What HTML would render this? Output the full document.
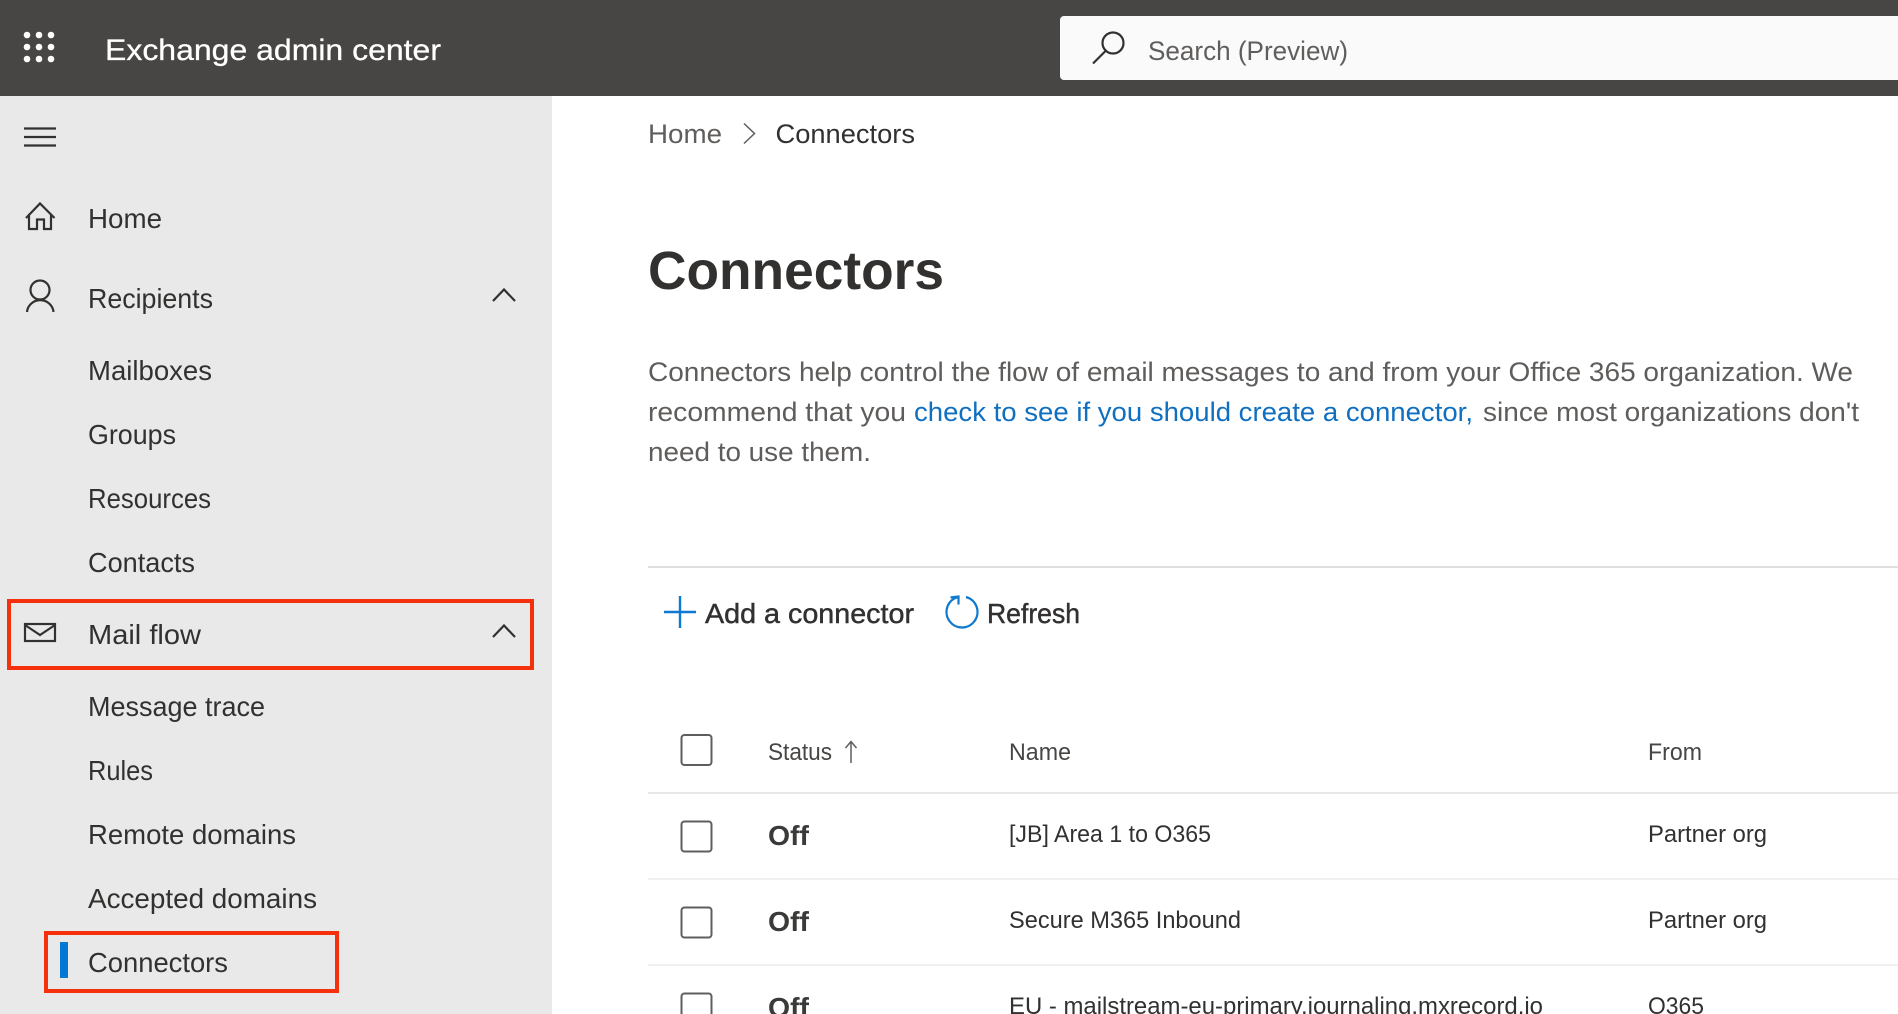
<!DOCTYPE html>
<html lang="en">
<head>
<meta charset="utf-8">
<title>Exchange admin center - Connectors</title>
<style>
html,body{margin:0;padding:0;width:1898px;height:1014px;overflow:hidden;background:#fff}
svg{display:block}
text{font-family:"Liberation Sans",sans-serif;white-space:pre}
.nav{font-size:27.5px;fill:#323130}
.para{font-size:27px;fill:#5f5d5b}
.link{font-size:27px;fill:#0f6fc0}
.cell{font-size:24.5px;fill:#323130}
.hdr{font-size:24.5px;fill:#484644}
.off{font-size:28px;font-weight:700;fill:#3b3a39}
.tool{font-size:28px;fill:#323130;stroke:#323130;stroke-width:.45px}
.ic{fill:none;stroke:#323130;stroke-width:2.2}
.cb{fill:#fff;stroke:#605e5c;stroke-width:2}
</style>
</head>
<body>
<svg width="1898" height="1014" viewBox="0 0 1898 1014" xmlns="http://www.w3.org/2000/svg">
<rect width="1898" height="1014" fill="#fff"/>

<!-- top bar -->
<rect width="1898" height="96" fill="#484644"/>
<g fill="#fff">
<circle cx="27" cy="35" r="3.3"/><circle cx="39" cy="35" r="3.3"/><circle cx="51" cy="35" r="3.3"/>
<circle cx="27" cy="47" r="3.3"/><circle cx="39" cy="47" r="3.3"/><circle cx="51" cy="47" r="3.3"/>
<circle cx="27" cy="59" r="3.3"/><circle cx="39" cy="59" r="3.3"/><circle cx="51" cy="59" r="3.3"/>
</g>
<text x="105" y="60" font-size="30" fill="#fff" stroke="#fff" stroke-width=".3" textLength="336" lengthAdjust="spacingAndGlyphs">Exchange admin center</text>
<path d="M1060 80 V20 a4 4 0 0 1 4-4 H1898 V80 H1064 a4 4 0 0 1-4-4z" fill="#fafafa"/>
<circle cx="1113" cy="43" r="10.5" class="ic"/>
<path d="M1105.500 51 L1093 63.500" class="ic"/>
<text x="1148" y="60" font-size="27" fill="#605e5c" textLength="200" lengthAdjust="spacingAndGlyphs">Search (Preview)</text>

<!-- sidebar -->
<rect x="0" y="96" width="552" height="918" fill="#e9e9e9"/>
<path d="M24 128.500H56M24 137H56M24 145.500H56" class="ic"/>

<path d="M26 218 L40 203.500 L54.500 218" class="ic"/>
<path d="M29 215 V229 H37 V219.500 H44 V229 H51 V215" class="ic"/>
<text x="88" y="228" class="nav" textLength="74" lengthAdjust="spacingAndGlyphs">Home</text>

<circle cx="40" cy="290" r="9.5" class="ic"/>
<path d="M27 312 A13.300 13 0 0 1 53.500 312" class="ic"/>
<text x="88" y="308" class="nav" textLength="125" lengthAdjust="spacingAndGlyphs">Recipients</text>
<path d="M493 301 L504 289.500 L515 301" class="ic"/>

<text x="88" y="380" class="nav" textLength="124" lengthAdjust="spacingAndGlyphs">Mailboxes</text>
<text x="88" y="444" class="nav" textLength="88" lengthAdjust="spacingAndGlyphs">Groups</text>
<text x="88" y="508" class="nav" textLength="123" lengthAdjust="spacingAndGlyphs">Resources</text>
<text x="88" y="572" class="nav" textLength="107" lengthAdjust="spacingAndGlyphs">Contacts</text>

<rect x="9" y="601" width="523" height="67" fill="none" stroke="#f5310d" stroke-width="4"/>
<rect x="25" y="624" width="30" height="17" class="ic"/>
<path d="M25 625 L40 635 L55 625" class="ic"/>
<text x="88" y="644" class="nav" textLength="113" lengthAdjust="spacingAndGlyphs">Mail flow</text>
<path d="M493 637 L504 625.500 L515 637" class="ic"/>

<text x="88" y="716" class="nav" textLength="177" lengthAdjust="spacingAndGlyphs">Message trace</text>
<text x="88" y="780" class="nav" textLength="65" lengthAdjust="spacingAndGlyphs">Rules</text>
<text x="88" y="844" class="nav" textLength="208" lengthAdjust="spacingAndGlyphs">Remote domains</text>
<text x="88" y="908" class="nav" textLength="229" lengthAdjust="spacingAndGlyphs">Accepted domains</text>
<rect x="46" y="933" width="291" height="58" fill="none" stroke="#f5310d" stroke-width="4"/>
<rect x="60" y="942" width="8" height="36" fill="#0078d4"/>
<text x="88" y="972" class="nav" textLength="140" lengthAdjust="spacingAndGlyphs">Connectors</text>

<!-- breadcrumb -->
<text x="648" y="143" font-size="27" fill="#605e5c" textLength="74" lengthAdjust="spacingAndGlyphs">Home</text>
<path d="M744 123.500 L754.500 133.500 L744 143.500" fill="none" stroke="#605e5c" stroke-width="1.500"/>
<text x="775.500" y="143" font-size="27" fill="#323130" textLength="139.500" lengthAdjust="spacingAndGlyphs">Connectors</text>

<!-- title -->
<text x="648" y="289" font-size="54" font-weight="700" fill="#323130" textLength="296" lengthAdjust="spacingAndGlyphs">Connectors</text>

<!-- paragraph -->
<text x="648" y="381" class="para" textLength="1205" lengthAdjust="spacingAndGlyphs">Connectors help control the flow of email messages to and from your Office 365 organization. We</text>
<text x="648" y="421" class="para" textLength="258" lengthAdjust="spacingAndGlyphs">recommend that you</text>
<text x="914" y="421" class="link" textLength="559" lengthAdjust="spacingAndGlyphs">check to see if you should create a connector,</text>
<text x="1483" y="421" class="para" textLength="376" lengthAdjust="spacingAndGlyphs">since most organizations don't</text>
<text x="648" y="461" class="para" textLength="223" lengthAdjust="spacingAndGlyphs">need to use them.</text>

<rect x="648" y="566" width="1250" height="2" fill="#e1dfdd"/>

<!-- toolbar -->
<path d="M664 612H696M680 596V628" fill="none" stroke="#0f78cf" stroke-width="2.400"/>
<text x="705" y="623" class="tool" textLength="209" lengthAdjust="spacingAndGlyphs">Add a connector</text>
<path d="M966 597 A15.500 15.500 0 1 1 958 597" fill="none" stroke="#0f78cf" stroke-width="2.200"/>
<path d="M950.500 597.500 L958.500 596.500 V604.500" fill="none" stroke="#0f78cf" stroke-width="2.200"/>
<text x="987" y="623" class="tool" textLength="93" lengthAdjust="spacingAndGlyphs">Refresh</text>

<!-- table header -->
<rect x="681.500" y="735" width="30" height="30" rx="3" class="cb"/>
<text x="768" y="760" class="hdr" textLength="64" lengthAdjust="spacingAndGlyphs">Status</text>
<path d="M851 763V742M845.500 748 L851 741.500 L856.500 748" fill="none" stroke="#605e5c" stroke-width="1.500"/>
<text x="1009" y="760" class="hdr" textLength="62" lengthAdjust="spacingAndGlyphs">Name</text>
<text x="1648" y="760" class="hdr" textLength="54" lengthAdjust="spacingAndGlyphs">From</text>
<rect x="648" y="792" width="1250" height="2" fill="#e8e7e6"/>

<!-- row 1 -->
<rect x="681.500" y="821.500" width="30" height="30" rx="3" class="cb"/>
<text x="768" y="845" class="off" textLength="41" lengthAdjust="spacingAndGlyphs">Off</text>
<text x="1009" y="842" class="cell" textLength="202" lengthAdjust="spacingAndGlyphs">[JB] Area 1 to O365</text>
<text x="1648" y="842" class="cell" textLength="119" lengthAdjust="spacingAndGlyphs">Partner org</text>
<rect x="648" y="878" width="1250" height="2" fill="#f1f0ef"/>

<!-- row 2 -->
<rect x="681.500" y="907.500" width="30" height="30" rx="3" class="cb"/>
<text x="768" y="931" class="off" textLength="41" lengthAdjust="spacingAndGlyphs">Off</text>
<text x="1009" y="928" class="cell" textLength="232" lengthAdjust="spacingAndGlyphs">Secure M365 Inbound</text>
<text x="1648" y="928" class="cell" textLength="119" lengthAdjust="spacingAndGlyphs">Partner org</text>
<rect x="648" y="964" width="1250" height="2" fill="#f1f0ef"/>

<!-- row 3 -->
<rect x="681.500" y="993.500" width="30" height="30" rx="3" class="cb"/>
<text x="768" y="1017" class="off" textLength="41" lengthAdjust="spacingAndGlyphs">Off</text>
<text x="1009" y="1014" class="cell" textLength="534" lengthAdjust="spacingAndGlyphs">EU - mailstream-eu-primary.journaling.mxrecord.io</text>
<text x="1648" y="1014" class="cell" textLength="56" lengthAdjust="spacingAndGlyphs">O365</text>
</svg>
</body>
</html>
